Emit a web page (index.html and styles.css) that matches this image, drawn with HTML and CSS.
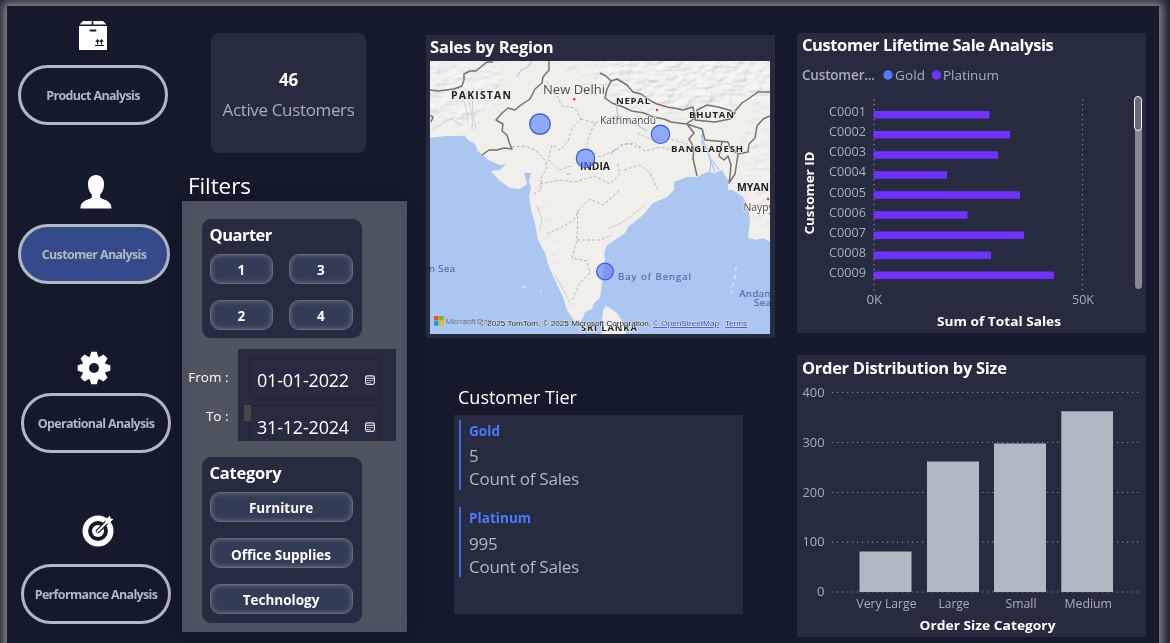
FILE: index.html
```
<!DOCTYPE html>
<html lang="en">
<head>
<meta charset="utf-8">
<title>Customer Analysis</title>
<link rel="stylesheet" href="styles.css">
</head>
<body>
<main class="frame">
  <nav class="nav">
    <div class="nav-item product">
      <svg class="icon" width="30" height="30" viewBox="0 0 30 30"><path fill="#fff" d="M5 0h8.700v3.600H1.600zM15.300 0H25l3.400 3.600H15.300zM1 5h28v24H1z"/><path stroke="#14192c" stroke-width="2" stroke-linecap="round" d="M12.500 9.500h5"/><path stroke="#14192c" stroke-width="1.200" fill="none" d="M17 24.500h9M19.500 23.500v-4M23.500 23.500v-4M17.800 20.700l1.700-1.800 1.700 1.800M21.800 20.700l1.700-1.800 1.700 1.800"/></svg>
      <button class="pill">Product Analysis</button>
    </div>
    <div class="nav-item customer">
      <svg class="icon" width="32" height="34" viewBox="0 0 32 34"><path fill="#fff" d="M16 0c5 0 8 3.500 8 9 0 4.500-1.300 8-3.800 10.500v3C22 25 31.500 24.500 31.500 33.500H.5C.5 24.500 10 25 11.800 22.500v-3C9.300 17 8 13.500 8 9c0-5.500 3-9 8-9z"/></svg>
      <button class="pill active">Customer Analysis</button>
    </div>
    <div class="nav-item operational">
      <svg class="icon" width="34" height="34" viewBox="-17 -17 34 34"><g fill="#fff"><circle r="12.300"/><path d="M-4.200-11-2.800-16.300H2.800L4.200-11V11L2.800 16.300H-2.800L-4.200 11z"/><path transform="rotate(45)" d="M-4.200-11-2.800-16.300H2.800L4.200-11V11L2.800 16.300H-2.800L-4.200 11z"/><path transform="rotate(90)" d="M-4.200-11-2.800-16.300H2.800L4.200-11V11L2.800 16.300H-2.800L-4.200 11z"/><path transform="rotate(135)" d="M-4.200-11-2.800-16.300H2.800L4.200-11V11L2.800 16.300H-2.800L-4.200 11z"/></g><circle r="5" fill="#14192c"/></svg>
      <button class="pill">Operational Analysis</button>
    </div>
    <div class="nav-item performance">
      <svg class="icon" width="32" height="32" viewBox="0 0 32 32"><circle cx="16" cy="16" r="12.700" fill="none" stroke="#fff" stroke-width="5.600"/><circle cx="16" cy="16" r="6" fill="#fff"/><path d="M16 16 29 3" stroke="#14192c" stroke-width="4.400" stroke-linecap="round"/><path d="M15.500 16.500 25 7" stroke="#fff" stroke-width="1.800" stroke-linecap="round"/><path fill="#fff" d="m23 8 .7-3.200L28 .5l.5 3 3 .5-4.300 4.300L24 9z"/></svg>
      <button class="pill">Performance Analysis</button>
    </div>
  </nav>

  <section class="filters-col">
    <div class="kpi"><strong>46</strong><span>Active Customers</span></div>
    <h2 class="filters-title">Filters</h2>
    <div class="filters">
      <div class="slicer quarter">
        <h3>Quarter</h3>
        <div class="tiles two"><button>1</button><button>3</button><button>2</button><button>4</button></div>
      </div>
      <div class="dates">
        <div class="date-labels"><span>From :</span><span>To :</span></div>
        <div class="date-box">
          <div class="date"><span>01-01-2022</span><svg width="10" height="10" viewBox="0 0 10 10"><rect x=".6" y=".8" width="8.800" height="8.600" rx="1.800" fill="none" stroke="#e4e4e4" stroke-width="1.200"/><path stroke="#e4e4e4" d="M1 3.300h8M2.200 5.500h1.400M4.300 5.500h1.400M6.400 5.500h1.400M2.200 7.500h1.400M4.300 7.500h1.400"/></svg></div>
          <div class="date"><span>31-12-2024</span><svg width="10" height="10" viewBox="0 0 10 10"><rect x=".6" y=".8" width="8.800" height="8.600" rx="1.800" fill="none" stroke="#e4e4e4" stroke-width="1.200"/><path stroke="#e4e4e4" d="M1 3.300h8M2.200 5.500h1.400M4.300 5.500h1.400M6.400 5.500h1.400M2.200 7.500h1.400M4.300 7.500h1.400"/></svg></div>
          <i class="handle"></i>
        </div>
      </div>
      <div class="slicer category">
        <h3>Category</h3>
        <div class="tiles"><button>Furniture</button><button class="low">Office Supplies</button><button>Technology</button></div>
      </div>
    </div>
  </section>

  <section class="middle">
    <div class="panel map-panel">
      <h3>Sales by Region</h3>
      <svg class="map" width="340" height="273" viewBox="430 61 340 273">
        <defs>
          <filter id="relief" x="0" y="0" width="100%" height="100%">
            <feTurbulence type="fractalNoise" baseFrequency=".07 .13" numOctaves="4" seed="8"/>
            <feDiffuseLighting surfaceScale="2.600" lighting-color="#fff"><feDistantLight azimuth="230" elevation="62"/></feDiffuseLighting>
          </filter>
          <filter id="soft"><feGaussianBlur stdDeviation="5"/></filter>
          <mask id="hills"><g fill="#fff" filter="url(#soft)"><path d="M600 55H775V112L740 100 725 122 690 120 640 108 600 88z"/><path opacity=".8" d="M425 61H500V95L480 125 450 130 425 110z"/><path opacity=".45" d="M740 120 775 110V235L750 215 735 185z"/><path opacity=".3" d="M532 190 545 190 560 240 580 300 570 312 550 265z"/><path opacity=".45" d="M550 61H605V90L585 85z"/></g></mask>
        </defs>
        <rect x="430" y="61" width="340" height="273" fill="#f0efec"/>
        <g mask="url(#hills)" opacity=".55"><rect x="430" y="61" width="340" height="273" filter="url(#relief)" style="mix-blend-mode:multiply"/></g>
        <path fill="#abc6f1" d="M430 138 445 136 465 136 468 140 475 144 478 151 484 156 488 160 500 165 506 164 500 170 491 171 499 180 510 188 520 189 527 184 524 173 531 173 529 181 531 188 529 197 531 210 535 223 538 240 545 253 549 267 555 280 563 297 567 310 572 318 578 324 583 318 585 312 592 309 594 303 600 298 602 283 603 273 605 260 604 253 607 245 615 240 625 233 628 227 643 215 653 203 667 197 674 190 674 182 687 177 697 177 707 172 715 173 722 170 728 180 728 190 733 190 743 197 748 207 750 220 748 238 757 240 763 238 770 242V334H430z"/>
        <path fill="#f0efec" d="M603 310 606 306 610 308 617 313 623 322 626 334H602V320z"/>
        <g fill="none" stroke="#abc6f1" stroke-width="1.300"><path d="M517 77 521 70 528 67 532 61M703 130 702 143 707 150 711 160 710 173M712 160 719 170M616 104 618 116 635 124 647 131M701 135 707 151 715 172M567 174h3M611 154 616 149"/></g>
        <g fill="none" stroke="#b3b1af" stroke-width=".9" stroke-dasharray="3 2"><path d="M512 147 525 146 535 150 545 160 547 168 541 178 541 190 533 194M557 96 562 106 575 108 581 119 572 128 568 141 560 150 552 145 548 160 559 170 571 166M581 119 595 123 590 133 586 146 600 157 615 150 627 143 640 148M540 184 560 180 575 182 595 176 610 184 620 174 617 162M547 234 560 228 574 220 578 211 590 199 603 205 620 190M578 211 577 240 572 258 587 261 590 273 580 283 572 300M577 240 600 240 612 235M595 123 617 116 628 120M620 145 635 143 645 151 660 147 675 151M624 170 640 165 650 173 658 190M638 133 652 140 670 139 688 144"/></g>
        <g fill="none" stroke="#c9c8c5" stroke-width=".8"><path d="M459 93q9 12 9 30M466 96q8 15 6 34M474 89q-4 20 2 40M433 129 451 119 463 126M546 80 551 90 557 95M555 275 563 289 570 303M537 205 542 220 540 230M608 229 625 221 645 205"/></g>
        <g fill="none" stroke="#74736f" stroke-width="1.500" stroke-linejoin="round"><path d="M430 90 438 91 446 90 454 89 462 86 464 80 464 74 470 71 476 71 483 65 487 62 493 62M549 61 549 70 543 77 542 83 535 89 530 99 521 105 515 110 508 108 502 113 496 120 503 124 502 131 507 135 509 142 512 149 504 148 497 150 489 150 482 155M430 115 433 117 431 122"/><path d="M600 73 606 76 611 81 617 79 627 85 633 92 641 94 651 101 657 104 667 107 674 108 683 110 693 107 695 118 686 124 671 122 664 119 653 117 644 113 632 111 623 107 612 103 605 98 607 89 611 81M695 120 697 110 707 105 718 107 729 110 735 113 730 119 715 122 704 121zM735 111 742 103 751 97 758 92 770 92"/><path d="M687 124 694 133 689 139 694 148 693 158 697 176M687 124 702 129 705 140 728 142 731 150 738 153M722 142 719 156 724 160 728 156 731 165 730 176 729 183 735 174 738 154 748 152 749 144 755 138 757 126 763 119 770 116"/></g>
        <path fill="none" stroke="#dce7f7" stroke-width="1.500" stroke-dasharray="4 4" d="M736 267 735 278 731 293M522 287h7M540 291h2"/>
        <g class="country"><text x="451" y="99" textLength="60">PAKISTAN</text><text x="616" y="104" textLength="34" class="sm">NEPAL</text><text x="689" y="118" textLength="45" class="sm">BHUTAN</text><text x="671" y="152" textLength="72" class="sm">BANGLADESH</text><text x="580" y="170" textLength="30" lengthAdjust="spacingAndGlyphs">INDIA</text><text x="737" y="191" textLength="56">MYANMAR</text><text x="581" y="331" textLength="56" class="sm">SRI LANKA</text></g>
        <g class="city"><text x="543" y="94" textLength="62" lengthAdjust="spacingAndGlyphs" font-size="13.500">New Delhi</text><text x="600" y="123.500" textLength="56" lengthAdjust="spacingAndGlyphs" font-size="11.500">Kathmandu</text><text x="743.500" y="211" textLength="53" lengthAdjust="spacingAndGlyphs" font-size="11">Naypyidaw</text></g>
        <g class="sea"><text x="429" y="271.500" textLength="26">n Sea</text><text x="618" y="280" textLength="73">Bay of Bengal</text><text x="739.500" y="296.500" textLength="46">Andaman</text><text x="754" y="306" textLength="17">Sea</text></g>
        <g fill="#d44"><circle cx="574.300" cy="99.300" r="1.300"/><circle cx="657" cy="110" r="1.300"/><circle cx="768" cy="199" r="1.300"/></g>
        <g fill="#587cff" fill-opacity=".62" stroke="#3659df" stroke-width="1.200"><circle cx="540" cy="124" r="10.200"/><circle cx="585.500" cy="158.300" r="9.200"/><circle cx="660.500" cy="134.300" r="9.200"/><circle cx="605" cy="271.500" r="8.400"/></g>
        <path fill="#f25022" d="M434 316h4.500v4.500H434z"/><path fill="#7fba00" d="M439.200 316h4.500v4.500h-4.500z"/><path fill="#00a4ef" d="M434 321.200h4.500v4.500H434z"/><path fill="#ffb900" d="M439.200 321.200h4.500v4.500h-4.500z"/>
        <text x="445.500" y="323.500" class="bing" textLength="46">Microsoft Bing</text>
        <g class="credit"><text x="479" y="326" textLength="172" lengthAdjust="spacingAndGlyphs">© 2025 TomTom, © 2025 Microsoft Corporation,</text><text x="653" y="326" textLength="66" lengthAdjust="spacingAndGlyphs" class="link">© OpenStreetMap</text><text x="725" y="326" textLength="22" lengthAdjust="spacingAndGlyphs" class="link">Terms</text></g>
      </svg>
    </div>
    <h2 class="tier-title">Customer Tier</h2>
    <div class="tier">
      <div class="tier-row"><h4>Gold</h4><p>5</p><p>Count of Sales</p></div>
      <div class="tier-row"><h4>Platinum</h4><p>995</p><p>Count of Sales</p></div>
    </div>
  </section>

  <section class="charts">
    <div class="panel lifetime">
      <h3>Customer Lifetime Sale Analysis</h3>
      <svg width="349" height="274" viewBox="797 59 349 274">
        <g class="legend"><text x="802" y="80" textLength="73" class="b">Customer...</text><circle cx="888" cy="75" r="4.700" fill="#4e7aff"/><text x="895" y="80" textLength="30">Gold</text><circle cx="936.500" cy="75" r="4.700" fill="#7030ff"/><text x="943" y="80" textLength="56">Platinum</text></g>
        <path class="grid" d="M874 99V291M1082.500 99V291"/>
        <g fill="#7030ff"><path d="M873.500 111h116v7.500h-116zM873.500 131h136.500v7.500H873.500zM873.500 151.200H998v7.500H873.500zM873.500 171.200H947v7.500h-73.500zM873.500 191.300H1020v7.500H873.500zM873.500 211.300h94v7.500h-94zM873.500 231.400H1024v7.500H873.500zM873.500 251.500H991v7.500H873.500zM873.500 271.500H1054v7.500H873.500z"/></g>
        <g class="axis"><text x="829" y="116" textLength="37" lengthAdjust="spacingAndGlyphs">C0001</text><text x="829" y="136" textLength="37" lengthAdjust="spacingAndGlyphs">C0002</text><text x="829" y="156" textLength="37" lengthAdjust="spacingAndGlyphs">C0003</text><text x="829" y="176" textLength="37" lengthAdjust="spacingAndGlyphs">C0004</text><text x="829" y="197" textLength="37" lengthAdjust="spacingAndGlyphs">C0005</text><text x="829" y="217" textLength="37" lengthAdjust="spacingAndGlyphs">C0006</text><text x="829" y="237" textLength="37" lengthAdjust="spacingAndGlyphs">C0007</text><text x="829" y="257" textLength="37" lengthAdjust="spacingAndGlyphs">C0008</text><text x="829" y="277" textLength="37" lengthAdjust="spacingAndGlyphs">C0009</text><text x="866.500" y="304" textLength="15.500" lengthAdjust="spacingAndGlyphs">0K</text><text x="1072" y="304" textLength="22" lengthAdjust="spacingAndGlyphs">50K</text></g>
        <g class="axis-title"><text x="937" y="326" textLength="124" lengthAdjust="spacingAndGlyphs">Sum of Total Sales</text><text transform="translate(814 234.500) rotate(-90)" textLength="83" lengthAdjust="spacingAndGlyphs">Customer ID</text></g>
        <rect x="1135" y="97" width="7" height="192" rx="3.500" fill="#858994"/><rect x="1134.500" y="96.500" width="7" height="34" rx="3.500" fill="#666a74" stroke="#f4f4f4"/>
      </svg>
    </div>
    <div class="panel distribution">
      <h3>Order Distribution by Size</h3>
      <svg width="349" height="256" viewBox="797 381 349 256">
        <path class="grid" d="M832 392.500h308M832 442.500h308M832 492.500h308M832 542.200h308M832 592h308"/>
        <path fill="#b2b8c3" d="M859.500 551.500h52V592h-52zM927 461.500h52V592h-52zM994 443.500h52V592h-52zM1061.300 411.200h51.700V592h-51.700z"/>
        <g class="axis"><text x="802.500" y="397" textLength="22" lengthAdjust="spacingAndGlyphs">400</text><text x="802.500" y="447" textLength="22" lengthAdjust="spacingAndGlyphs">300</text><text x="802.500" y="497" textLength="22" lengthAdjust="spacingAndGlyphs">200</text><text x="802.500" y="546" textLength="22" lengthAdjust="spacingAndGlyphs">100</text><text x="817" y="596" textLength="7.500" lengthAdjust="spacingAndGlyphs">0</text><text x="856.500" y="608" textLength="60" lengthAdjust="spacingAndGlyphs">Very Large</text><text x="938.500" y="608" textLength="31" lengthAdjust="spacingAndGlyphs">Large</text><text x="1005.500" y="608" textLength="31" lengthAdjust="spacingAndGlyphs">Small</text><text x="1064.500" y="608" textLength="47.500" lengthAdjust="spacingAndGlyphs">Medium</text></g>
        <g class="axis-title"><text x="919.500" y="630" textLength="136" lengthAdjust="spacingAndGlyphs">Order Size Category</text></g>
      </svg>
    </div>
  </section>
</main>
</body>
</html>
```
FILE: styles.css
```
* { box-sizing: border-box; margin: 0; padding: 0; }
body { width: 1170px; height: 643px; overflow: hidden; background: #1c2030; color: #fff; font-family: "Open Sans", "Noto Sans", sans-serif; }
button { font: inherit; color: inherit; }
svg { display: block; }
svg text { font-family: "Open Sans", "Noto Sans", sans-serif; }
.frame { display: grid; grid-template-columns: 175px 244px 371px 362px; margin: 6px 11px 0 7px; height: 660px; background: #14192c; box-shadow: 0 0 9px 4px #858a91; }

.nav-item { display: flex; flex-direction: column; align-items: flex-start; }
.pill { width: 150px; height: 60px; border: 3px solid #b2b8c3; border-radius: 30px; background: none; color: #b2b8c3; font-size: 12.5px; font-weight: 700; letter-spacing: -.66px; white-space: nowrap; }
.pill.active { width: 152px; background: #344a8a; }
.product { padding: 15px 0 0 11px; gap: 14px; }
.product .icon { margin-left: 60px; }
.customer { padding: 50px 0 0 11px; gap: 15px; }
.customer .icon { margin-left: 62px; }
.operational { padding: 67px 0 0 14px; gap: 8px; }
.operational .icon { margin-left: 56px; }
.performance { padding: 62px 0 0 14px; gap: 17px; }
.performance .icon { margin-left: 60.5px; }

.kpi { display: flex; flex-direction: column; align-items: center; width: 155px; height: 120px; margin: 27px 0 0 29px; padding-top: 32px; border-radius: 8px; background: #262b3f; }
.kpi strong { font-size: 17px; line-height: 30px; letter-spacing: -.1px; }
.kpi span { font-size: 17px; line-height: 30px; letter-spacing: -.35px; color: #a9aeba; white-space: nowrap; }
.filters-title { height: 48px; padding-left: 6px; font-size: 22.5px; font-weight: 400; line-height: 66px; letter-spacing: -.1px; }
.filters { width: 225px; height: 431px; padding-top: 18px; background: #4f5461; box-shadow: inset 0 0 14px #484d5c, 0 0 14px #0d1225; }
.slicer { width: 160px; margin-left: 20px; padding: 4px 8px 0 7.5px; border-radius: 9px; background: #262b40; }
.slicer h3 { height: 31px; font-size: 16.5px; line-height: 24px; letter-spacing: -.5px; }
.category h3 { letter-spacing: -.25px; }
.quarter { height: 119px; }
.category { height: 166px; margin-top: 16px; }
.tiles { display: grid; width: 143px; gap: 16px; }
.two { grid-template-columns: 63.5px 63.5px; }
.tiles button { height: 30px; border: 1px solid #676c79; border-radius: 10px; background: #323c56; box-shadow: inset 0 0 4px 1px #626875; font-size: 13.5px; font-weight: 700; letter-spacing: -.2px; }
.two button { padding-top: 1px; }
.category .tiles button { padding-top: 1px; font-size: 13.5px; letter-spacing: 0; }
.category .tiles .low { padding-top: 3px; }
.dates { display: flex; height: 92px; margin-top: 11px; }
.date-labels { width: 56px; padding: 9px 9.5px 0 0; font-size: 13.5px; line-height: 39px; }
.date-labels span { display: flex; justify-content: flex-end; white-space: nowrap; }
.date-box { position: relative; width: 158px; height: 92px; padding: 9px 16px 0 11px; overflow: hidden; background: #262b40; }
.date { display: flex; align-items: center; justify-content: space-between; height: 41px; margin-bottom: 6px; padding: 2px 4px 0 7px; border: 1px solid #20232e; font-size: 18px; letter-spacing: -.2px; }
.handle { position: absolute; left: 6px; top: 56px; width: 7px; height: 16px; background: #474747; }

.panel { background: #262b40; }
.panel h3 { font-size: 16.5px; line-height: 24px; letter-spacing: -.4px; white-space: nowrap; }
.map-panel { width: 349px; height: 303px; margin-top: 29px; padding: 0 4px; }
.panel.map-panel h3 { height: 26px; letter-spacing: -.2px; }
.country { font-size: 10.5px; font-weight: 700; fill: #222; stroke: #f4f3f0; stroke-width: 1.5px; stroke-opacity: .8; paint-order: stroke; }
.country .sm { font-size: 9.5px; }
.city { fill: #4c4c4c; stroke: #f4f3f0; stroke-width: 1.5px; paint-order: stroke; }
.sea { font-size: 9.5px; fill: #4e6da4; stroke: #4e6da4; stroke-width: .2px; }
.bing { font-size: 7.5px; fill: #67717f; }
.credit text { font-family: "Liberation Sans", sans-serif; font-size: 8px; fill: #222; stroke: #dce5f3; stroke-width: 1px; paint-order: stroke; }
.credit .link { fill: #3048a8; text-decoration: underline; }
.tier-title { height: 77px; padding: 46px 0 0 32px; font-size: 18px; font-weight: 400; line-height: 26px; letter-spacing: 0; }
.tier { width: 289px; height: 199px; margin-left: 28px; padding: 5px; background: #262b40; }
.tier-row { height: 70px; margin-bottom: 17px; padding-left: 8px; border-left: 2px solid #4668d8; }
.tier-row h4 { height: 24px; font-size: 13.5px; line-height: 22px; letter-spacing: .05px; color: #4e7aff; }
.tier-row p { height: 23px; font-size: 17px; line-height: 24px; letter-spacing: -.25px; color: #b2b8c3; }
.tier-row + .tier-row h4 { height: 25px; }

.charts .panel { width: 349px; }
.charts h3 { height: 26px; padding-left: 5px; }
.lifetime { height: 300px; margin-top: 27px; }
.distribution { height: 282px; margin-top: 22px; padding-top: 1px; }
.distribution h3 { height: 25px; }
.panel.distribution h3 { letter-spacing: -.3px; }
.legend { font-size: 13.5px; fill: #a9aeba; }
.legend .b { font-weight: 600; }
.axis { font-size: 12.5px; fill: #a9aeba; }
.axis-title { font-size: 13px; font-weight: 700; fill: #fff; }
.grid { fill: none; stroke: #888c99; stroke-width: 1.2px; stroke-dasharray: 1.2 3.8; }
```
